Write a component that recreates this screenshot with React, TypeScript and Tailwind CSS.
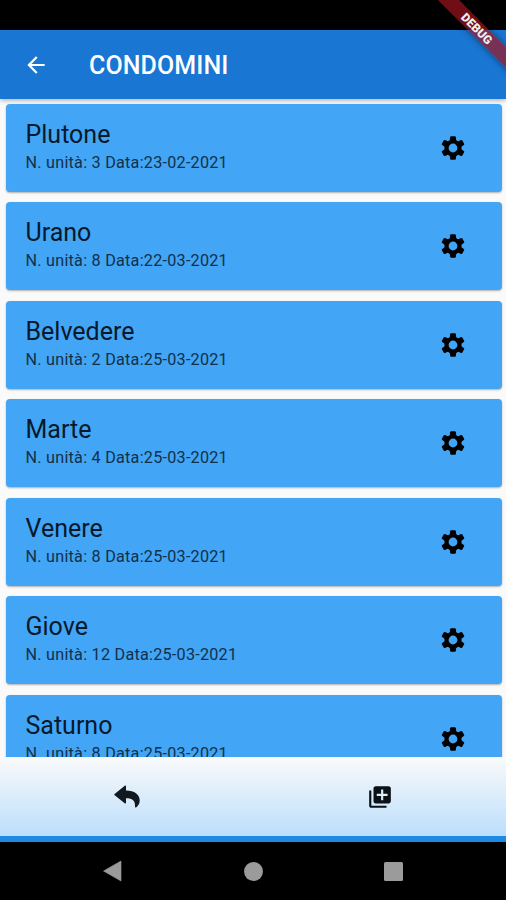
import React from "react";
import {MdArrowBack, MdLibraryAdd} from "react-icons/md";

const condomini = [
    {name: "Plutone", units: 3, date: "23-02-2021"},
    {name: "Urano", units: 8, date: "22-03-2021"},
    {name: "Belvedere", units: 2, date: "25-03-2021"},
    {name: "Marte", units: 4, date: "25-03-2021"},
    {name: "Venere", units: 8, date: "25-03-2021"},
    {name: "Giove", units: 12, date: "25-03-2021"},
    {name: "Saturno", units: 8, date: "25-03-2021"},
];

function GearIcon() {
    return (
        <svg className="mt-[32px]" width="24" height="24" viewBox="-12 -12 24 24">
            <circle r="6.5" fill="none" stroke="#000" strokeWidth="4.2"/>
            {[0, 60, 120, 180, 240, 300].map((angle) => (
                <path key={angle} d="M-3.2 -7 L-2.9 -10.8 Q-2.8 -11.8 -1.8 -11.8 H1.8 Q2.8 -11.8 2.9 -10.8 L3.2 -7 Z" transform={`rotate(${angle})`}/>
            ))}
        </svg>
    );
}

function ReplyIcon() {
    return (
        <svg width="26" height="23" viewBox="0 0 26 23" fill="#121820">
            <path d="M0.4 10 Q0 9.4 0.6 8.9 L10.8 0.7 Q12 0 12 1.2 V5.6 C20.5 5.6 25.7 9.6 25.7 15.4 C25.7 18 24.6 20.2 22.4 22.3 Q20.8 23 21 21.2 C21.4 15.6 18.5 13.2 12 13.2 V17.8 Q11.8 19.1 10.7 18.2 Z"/>
        </svg>
    );
}

function DebugBanner() {
    return (
        <div className="absolute right-0 top-0 h-[90px] w-[90px] overflow-hidden">
            <div className="absolute left-[-9.5px] top-[21px] flex h-[15px] w-[140px] rotate-45 items-center justify-center bg-[#a01420]/70 shadow-[0_0_6px_rgba(0,0,0,0.5)]">
                <span className="text-[12px] font-black leading-none text-[#eeeeee]">DEBUG</span>
            </div>
        </div>
    );
}

function CondominioCard({name, units, date}: {name: string; units: number; date: string}) {
    return (
        <div className="flex h-[88px] shrink-0 items-start justify-between rounded-[4px] bg-[#42a5f5] pl-5 pr-[37.5px] shadow-[0_1px_2px_rgba(0,0,0,0.3)]">
            <div className="pt-[16px]">
                <h2 className="text-[25px] leading-[30px] text-[#07192a]">{name}</h2>
                <p className="mt-[3px] whitespace-nowrap text-[16.2px] leading-5 tracking-[0.24px] text-[#12304a]">N. unità: {units} Data:{date}</p>
            </div>
            <GearIcon/>
        </div>
    );
}

export default function App() {
    return (
        <main className="relative flex h-[900px] w-[506px] flex-col overflow-hidden bg-[#fafafa] font-['Roboto',sans-serif]">
            <div className="h-[30px] shrink-0 bg-black"/>
            <header className="flex h-[68.5px] shrink-0 items-center bg-[#1976d2] pl-[22.5px] shadow-[0_1px_5px_rgba(0,0,0,0.35)]">
                <MdArrowBack className="mt-[1px] h-[26px] w-[26px] text-white"/>
                <h1 className="ml-[40.5px] pt-[2px] text-[25px] font-medium tracking-[0.1px] text-white">CONDOMINI</h1>
            </header>
            <section className="flex min-h-0 flex-1 flex-col gap-[10.45px] overflow-hidden pl-[5.5px] pr-[4px] pt-[5.5px]">
                {condomini.map((item) => (
                    <CondominioCard key={item.name} {...item}/>
                ))}
            </section>
            <nav className="grid h-[79px] shrink-0 grid-cols-2 items-center justify-items-center bg-linear-to-b from-[#fafafa] to-[#bbdefb]">
                <ReplyIcon/>
                <MdLibraryAdd className="h-[26px] w-[26px] text-[#0b1117]"/>
            </nav>
            <div className="h-[6px] shrink-0 bg-[#1e88e5]"/>
            <footer className="flex h-[58px] shrink-0 items-center bg-black text-[#9b9b9b]">
                <svg className="ml-[103px]" width="19" height="22" viewBox="0 0 19 22" fill="currentColor">
                    <path d="M0.5 11 L18 1 V21 Z" stroke="currentColor" strokeWidth="0.6" strokeLinejoin="round"/>
                </svg>
                <div className="ml-[122px] h-[19px] w-[19px] rounded-full bg-[#9b9b9b]"/>
                <div className="ml-[121px] h-[19px] w-[19px] rounded-[1.5px] bg-[#9b9b9b]"/>
            </footer>
            <DebugBanner/>
        </main>
    );
}
